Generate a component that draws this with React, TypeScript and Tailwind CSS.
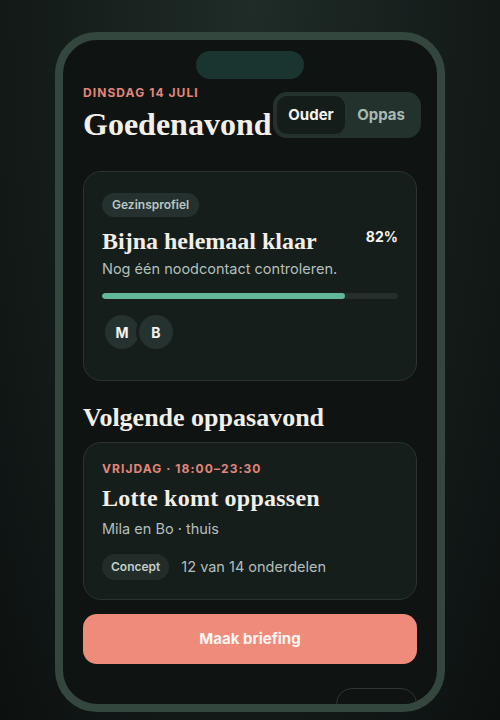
import React from "react";

const serif = { fontFamily: '"Liberation Serif", "DejaVu Serif", serif' };

function Card({ children, className = "" }: { children: React.ReactNode; className?: string }) {
  return (
    <div className={`rounded-[18px] border border-[#2a3532] bg-[#161e1c] ${className}`}>
      {children}
    </div>
  );
}

export default function App() {
  return (
    <div
      className="flex h-[720px] w-[500px] justify-center overflow-hidden bg-[radial-gradient(ellipse_at_50%_0%,#1f2c28_0%,#151d1b_55%,#0c1110_100%)] pt-[32px]"
      style={{ fontFamily: 'Inter, "Noto Sans", sans-serif' }}
    >
      <div className="h-[680px] w-[390px] shrink-0 overflow-hidden rounded-[42px] border-[8px] border-[#34473f] bg-[#0f1412]">
        <div className="relative flex h-full flex-col px-[20px]">
          {/* dynamic island */}
          <div className="mx-auto mt-[11px] h-[28px] w-[108px] shrink-0 rounded-full bg-[#1a3430]" />

          {/* header */}
          <div className="mt-[6px] flex items-end">
            <div className="shrink-0">
              <div className="text-[12px] font-bold uppercase leading-[16px] tracking-[0.09em] text-[#e0877a]">
                Dinsdag 14 juli
              </div>
              <h1 className="mt-[4px] text-[32px] font-bold leading-[38px] text-[#f2efe8]" style={serif}>
                Goedenavond
              </h1>
            </div>
            <div className="-mr-[4px] mb-[5px] ml-auto flex shrink-0 rounded-[14px] bg-[#24322e] p-[4px]">
              <div className="flex h-[38px] w-[68px] items-center justify-center rounded-[10px] bg-[#151d1b] text-[15px] font-bold text-[#f4f4f0]">
                Ouder
              </div>
              <div className="flex h-[38px] w-[72px] items-center justify-center text-[15px] font-bold text-[#a7bab3]">
                Oppas
              </div>
            </div>
          </div>

          {/* profile card */}
          <Card className="mt-[28px] h-[210px] shrink-0 px-[18px] pt-[19px]">
            <span className="inline-flex h-[24px] items-center rounded-full bg-[#25312e] px-[10px] text-[12px] font-semibold text-[#b9c6c1]">
              Gezinsprofiel
            </span>
            <div className="mt-[10px] flex items-start justify-between">
              <h2 className="text-[24px] font-bold leading-[28px] text-[#f2efe8]" style={serif}>
                Bijna helemaal klaar
              </h2>
              <span className="text-[14px] font-bold leading-[20px] text-[#f4f4f0]">82%</span>
            </div>
            <p className="mt-[4px] text-[14.5px] leading-[20px] text-[#b3bfba]">
              Nog één noodcontact controleren.
            </p>
            <div className="mt-[14px] h-[6px] w-full overflow-hidden rounded-full bg-[#242f2c]">
              <div className="h-full rounded-full bg-[#62b69a]" style={{ width: "82%" }} />
            </div>
            <div className="mt-[13px] flex">
              {["M", "B"].map((l) => (
                <div
                  key={l}
                  className="-mr-[6px] flex h-[40px] w-[40px] items-center justify-center rounded-full border-[3px] border-[#161e1c] bg-[#26322f] text-[14px] font-bold text-[#f4f4f0]"
                >
                  {l}
                </div>
              ))}
            </div>
          </Card>

          {/* next evening */}
          <h2 className="mt-[21px] text-[26px] font-bold leading-[32px] text-[#f2efe8]" style={serif}>
            Volgende oppasavond
          </h2>
          <Card className="mt-[8px] h-[158px] shrink-0 px-[18px] pt-[18px]">
            <div className="text-[12px] font-bold uppercase leading-[16px] tracking-[0.09em] text-[#e0877a]">
              Vrijdag · 18:00–23:30
            </div>
            <h3 className="mt-[6px] text-[24px] font-bold leading-[30px] tracking-[0.01em] text-[#f2efe8]" style={serif}>
              Lotte komt oppassen
            </h3>
            <p className="mt-[6px] text-[14.5px] leading-[20px] text-[#b3bfba]">Mila en Bo · thuis</p>
            <div className="mt-[15px] flex items-center gap-[12px]">
              <span className="inline-flex h-[26px] items-center rounded-full bg-[#222d2a] px-[9px] text-[12px] font-semibold text-[#c3cec9]">
                Concept
              </span>
              <span className="text-[14.5px] text-[#b3bfba]">12 van 14 onderdelen</span>
            </div>
          </Card>

          <button className="mt-[14px] h-[50px] w-full shrink-0 rounded-[14px] bg-[#ef8b7a] text-[15px] font-bold text-[#fff6f2]">
            Maak briefing
          </button>

          {/* bottom sheet peek */}
          <div className="absolute bottom-[-20px] right-[20px] h-[36px] w-[81px] rounded-t-[16px] border border-[#2c3734] bg-[#0f1412]" />
        </div>
      </div>
    </div>
  );
}
